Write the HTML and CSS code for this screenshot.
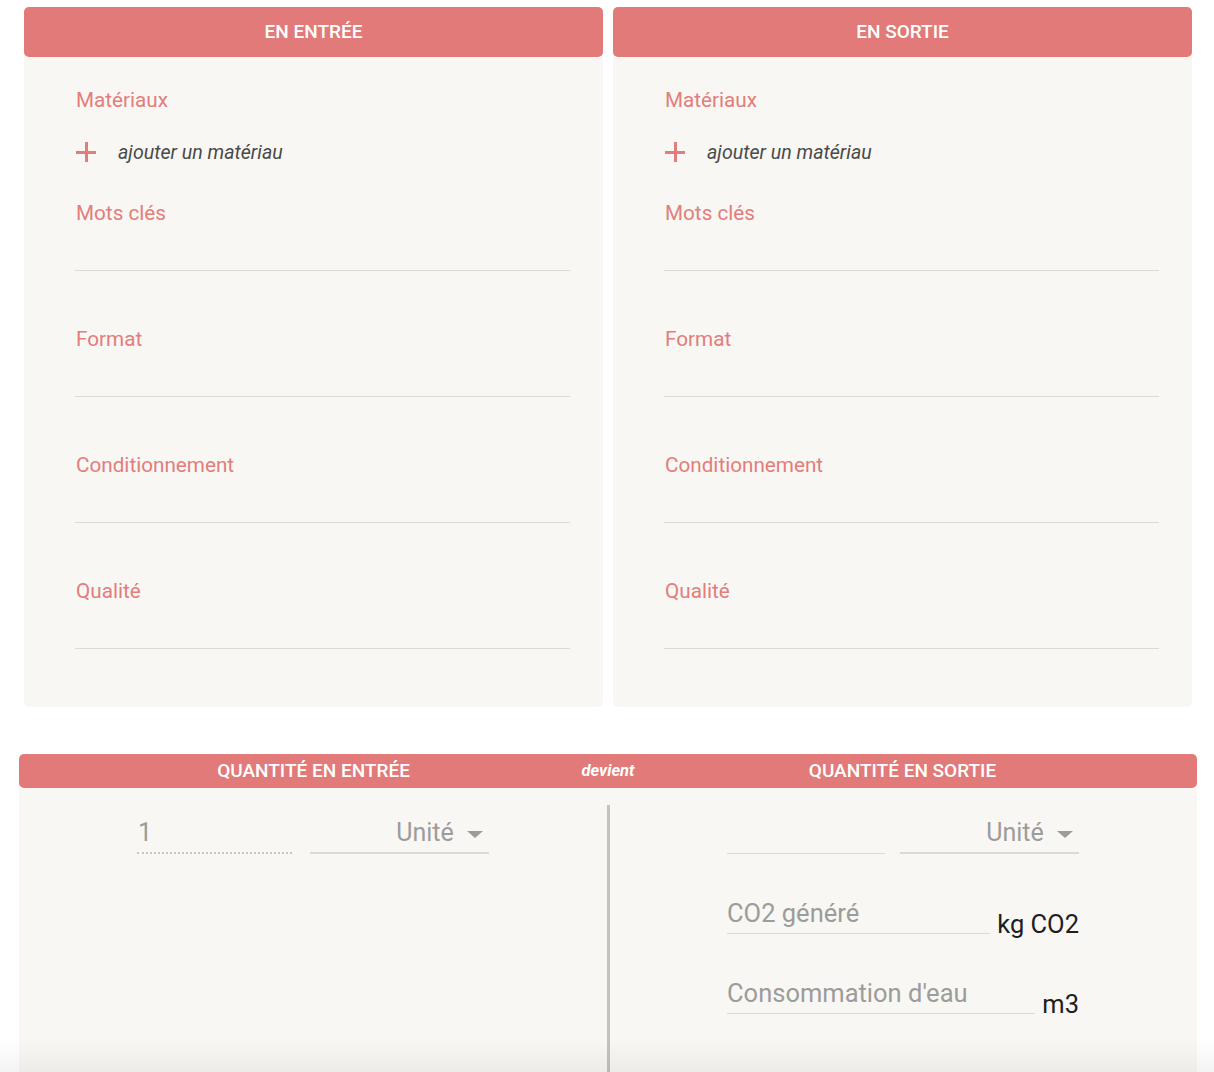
FILE: index.html
```html
<!DOCTYPE html>
<html lang="fr">
<head>
  <meta charset="UTF-8">
  <title>Transformation</title>
  <link rel="stylesheet" href="styles.css">
</head>
<body>

  <div class="cards">
    <div class="card">
      <div class="card-head">EN ENTRÉE</div>
      <div class="card-body">
        <div class="label">Matériaux</div>
        <div class="add-row">
          <span class="plus"></span>
          <span class="add-text">ajouter un matériau</span>
        </div>
        <div class="field">
          <div class="label">Mots clés</div>
          <div class="line-input"></div>
        </div>
        <div class="field">
          <div class="label">Format</div>
          <div class="line-input"></div>
        </div>
        <div class="field">
          <div class="label">Conditionnement</div>
          <div class="line-input"></div>
        </div>
        <div class="field">
          <div class="label">Qualité</div>
          <div class="line-input"></div>
        </div>
      </div>
    </div>

    <div class="card">
      <div class="card-head">EN SORTIE</div>
      <div class="card-body">
        <div class="label">Matériaux</div>
        <div class="add-row">
          <span class="plus"></span>
          <span class="add-text">ajouter un matériau</span>
        </div>
        <div class="field">
          <div class="label">Mots clés</div>
          <div class="line-input"></div>
        </div>
        <div class="field">
          <div class="label">Format</div>
          <div class="line-input"></div>
        </div>
        <div class="field">
          <div class="label">Conditionnement</div>
          <div class="line-input"></div>
        </div>
        <div class="field">
          <div class="label">Qualité</div>
          <div class="line-input"></div>
        </div>
      </div>
    </div>
  </div>

  <div class="quantity">
    <div class="q-head">
      <div class="q-title">QUANTITÉ EN ENTRÉE</div>
      <div class="q-mid"><span>devient</span></div>
      <div class="q-title">QUANTITÉ EN SORTIE</div>
    </div>
    <div class="q-body">
      <div class="q-col">
        <div class="q-inner">
          <div class="q-row">
            <div class="num dotted">1</div>
            <div class="unit-select">Unité <span class="caret"></span></div>
          </div>
        </div>
      </div>
      <div class="q-col right">
        <div class="q-inner">
          <div class="q-row">
            <div class="num">&nbsp;</div>
            <div class="unit-select">Unité <span class="caret"></span></div>
          </div>
          <div class="extra-row">
            <div class="extra-input">CO2 généré</div>
            <span class="extra-unit">kg CO2</span>
          </div>
          <div class="extra-row">
            <div class="extra-input">Consommation d'eau</div>
            <span class="extra-unit">m3</span>
          </div>
        </div>
      </div>
    </div>
  </div>

  <div class="bottom-fade"></div>

</body>
</html>
```

FILE: styles.css
```css
body {
  margin: 0;
  font-family: Roboto, "Liberation Sans", sans-serif;
  background: #ffffff;
  overflow: hidden;
}

.cards {
  display: grid;
  grid-template-columns: 579px 579px;
  gap: 10px;
  margin: 7px 0 0 24px;
}

.card {
  background: #f8f7f4;
  border-radius: 5px;
}

.card-head {
  background: #e17a78;
  color: #ffffff;
  border-radius: 5px;
  height: 50px;
  line-height: 50px;
  text-align: center;
  font-size: 19px;
  font-weight: 500;
}

.card-body {
  padding: 31px 33px 58px 51px;
}

.label {
  color: #e37d7b;
  font-size: 20.7px;
  line-height: 24px;
  padding-left: 1px;
}

.add-row {
  display: flex;
  align-items: center;
  height: 24px;
  margin: 28px 0 37px 1px;
}

.plus {
  position: relative;
  width: 20px;
  height: 20px;
  margin-right: 22px;
}

.plus::before,
.plus::after {
  content: "";
  position: absolute;
  background: #e37d7b;
}

.plus::before {
  left: 0;
  right: 0;
  top: 9px;
  height: 3px;
}

.plus::after {
  top: 0;
  bottom: 0;
  left: 9px;
  width: 3px;
}

.add-text {
  font-style: italic;
  font-size: 19.6px;
  color: #4a4a4a;
}

.field {
  margin-bottom: 56px;
}

.field:last-child {
  margin-bottom: 0;
}

.line-input {
  height: 45px;
  border-bottom: 1px solid #dcdad6;
}

/* quantity block */

.quantity {
  margin: 47px 17px 0 19px;
}

.q-head {
  display: grid;
  grid-template-columns: 1fr 0 1fr;
  background: #e17a78;
  border-radius: 5px;
  height: 34px;
  line-height: 34px;
  color: #ffffff;
}

.q-title {
  text-align: center;
  font-size: 19px;
  font-weight: 500;
}

.q-mid {
  display: flex;
  justify-content: center;
  overflow: visible;
  white-space: nowrap;
}

.q-mid span {
  font-style: italic;
  font-weight: 700;
  font-size: 16.5px;
}

.q-body {
  display: grid;
  grid-template-columns: 588px 1fr;
  background: #f8f7f4;
  padding-top: 17px;
  height: 300px;
}

.q-col {
  padding-left: 118px;
}

.q-col.right {
  border-left: 3px solid #c4c2be;
  padding-left: 117px;
}

.q-inner {
  width: 352px;
}

.q-row {
  display: flex;
  gap: 18px;
  padding-top: 10px;
}

.q-col.right .q-row {
  gap: 15px;
}

.num {
  width: 155px;
  height: 39px;
  line-height: 36px;
  font-size: 25px;
  color: #9c9c9a;
  border-bottom: 1px solid #dcdad6;
  padding-left: 1px;
  box-sizing: border-box;
}

.q-col.right .num {
  width: 158px;
}

.num.dotted {
  border-bottom: 2px dotted #c8c6c2;
}

.unit-select {
  width: 179px;
  height: 39px;
  line-height: 36px;
  font-size: 25px;
  color: #9c9c9a;
  text-align: right;
  padding-right: 6px;
  border-bottom: 2px solid #dcdad6;
  box-sizing: border-box;
}

.caret {
  display: inline-block;
  width: 0;
  height: 0;
  margin-left: 7px;
  vertical-align: middle;
  border-left: 8px solid transparent;
  border-right: 8px solid transparent;
  border-top: 7px solid #9c9c9a;
}

.extra-row {
  display: flex;
  align-items: flex-end;
  margin-top: 42px;
}

.extra-input {
  flex: 1;
  height: 38px;
  line-height: 34px;
  font-size: 25.5px;
  color: #9c9c9a;
  border-bottom: 1px solid #dcdad6;
  box-sizing: border-box;
}

.extra-unit {
  margin-left: 7px;
  font-size: 25.5px;
  line-height: 28px;
  color: #1e1e1e;
  margin-bottom: -4px;
}

.bottom-fade {
  position: fixed;
  left: 0;
  right: 0;
  bottom: 0;
  height: 34px;
  background: linear-gradient(rgba(0, 0, 0, 0), rgba(0, 0, 0, 0.045));
  pointer-events: none;
}
```
